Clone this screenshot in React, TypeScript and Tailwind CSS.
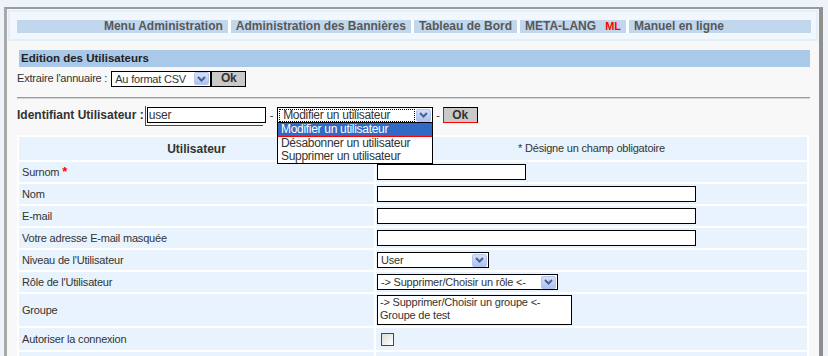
import React from 'react'

// petite flèche bleue des listes déroulantes (style XP)
function Arrow() {
  return (
    <span className="flex h-[13px] w-[15px] items-center justify-center rounded-[2px] border border-[#b4c6ee] bg-gradient-to-b from-[#d4e0fc] to-[#adc2f4]">
      <svg width="9" height="6" viewBox="0 0 9 6">
        <path d="M1 1l3.5 3.5L8 1" stroke="#4d6185" strokeWidth="2" fill="none" />
      </svg>
    </span>
  )
}

interface SelectProps {
  w: string;
  text: string;
}

function Select({ w, text }: SelectProps) {
  return (
    <div className={`flex h-[16px] items-center justify-between border border-black bg-white pl-[3px] pr-[1px] ${w}`}>
      <span className="leading-[14px] text-[#333]">{text}</span>
      <Arrow />
    </div>
  )
}

function TextBox({ w }: { w: string }) {
  return <div className={`h-[16px] border border-black bg-white ${w}`} />
}

function OkButton({ red }: { red?: boolean }) {
  return (
    <button
      className={`h-[16px] w-[35px] border border-black bg-[#c9c9c9] text-[12px] font-bold leading-[13px] text-[#333] ${
        red ? 'border-b-[#ff0000] border-l-[#ff0000]' : ''
      }`}
    >
      Ok
    </button>
  )
}

const menu = ['Menu Administration', 'Administration des Bannières', 'Tableau de Bord', 'META-LANG', 'Manuel en ligne']

export default function App() {
  return (
    <div className="h-[356px] w-[828px] overflow-hidden bg-[#edf3f8] pl-[4px] pt-[7px] font-['Liberation_Sans',Arial,sans-serif] text-[11px] tracking-[-0.2px] text-[#333]">
      <div className="h-[360px] w-[819px] border-l-[3px] border-r-4 border-t-2 border-l-[#a9a9a9] border-r-[#8f8f8f] border-t-[#9a9a9a] bg-[#f8f8f8]">
        {/* bandeau du menu */}
        <div className="ml-[1px] mt-[1px] w-[810px] border-2 border-[#e2eff9] bg-[#f1f7fc] pb-[6px] pl-[7px] pt-[8px]">
          <div className="flex h-[13px] w-[794px] items-stretch justify-center bg-[#c1d7ed] text-[12px] font-bold leading-[13px] tracking-normal text-[#585858]">
            {menu.map((m, i) => (
              <React.Fragment key={m}>
                {i > 0 && <span className="w-[3px] bg-white" />}
                <span className="px-[5px]">
                  {m}
                  {m === 'META-LANG' && <span className="ml-[9px] text-[11px] text-[#ff0000]">ML</span>}
                </span>
              </React.Fragment>
            ))}
          </div>
        </div>

        {/* contenu */}
        <div className="relative ml-[1px] mt-[1px] w-[810px] pl-[9px] pr-[1px] pt-[8px]">
          <div className="ml-[2px] flex h-[17px] w-[791px] items-center bg-[#aac9e8] pl-[2px] text-[11.5px] font-bold tracking-normal text-[#222]">
            Edition des Utilisateurs
          </div>

          <div className="mt-[4px] flex h-[15px] items-center">
            <span className="mr-[4px] text-[#333]">Extraire l'annuaire :</span>
            <Select w="w-[100px]" text="Au format CSV" />
            <OkButton />
          </div>

          <div className="mt-[11px] h-[2px] w-[793px] border-t border-[#9b9b9b] bg-[#d6d6d6]" />

          <div className="relative mt-[8px] flex h-[16px] items-center">
            <span className="mr-[3px] text-[12px] font-bold tracking-normal text-[#333]">Identifiant Utilisateur :</span>
            <div className="flex h-[16px] w-[119px] items-center border border-black bg-white pl-[1px] text-[12px] text-[#333]">user</div>
            <span className="mx-[4px]">-</span>
            <div className="relative flex h-[16px] w-[156px] items-center justify-between border border-black bg-white pr-[1px]">
              <span className="ml-[1px] flex h-[13px] w-[136px] items-center border border-dotted border-black pl-[3px] text-[12px] tracking-[-0.3px]">
                Modifier un utilisateur
              </span>
              <Arrow />
            </div>
            <span className="mx-[3px]">-</span>
            <OkButton red />

            {/* soulignement rouge autour du champ */}
            <span className="absolute left-[128px] top-[-1px] h-[20px] w-[1px] bg-[#ff0000]" />
            <span className="absolute left-[128px] top-[18px] h-[1px] w-[118px] bg-[#ff0000]" />

            {/* liste ouverte */}
            <div className="absolute left-[260px] top-[15px] z-10 w-[156px] border border-black bg-white text-[12px] leading-[13px] tracking-[-0.3px]">
              <div className="border-b border-[#ff0000] bg-[#316ac5] pl-[3px] text-white">Modifier un utilisateur</div>
              <div className="pl-[3px]">Désabonner un utilisateur</div>
              <div className="pl-[3px]">Supprimer un utilisateur</div>
            </div>
          </div>

          {/* tableau utilisateur */}
          <div className="mt-[12px] grid w-[792px] grid-cols-[355px_431px] gap-[2px] bg-white p-[2px]">
            <div className="flex h-[23px] items-center justify-center bg-[#e8f3fd] text-[12px] font-bold tracking-normal text-[#333]">Utilisateur</div>
            <div className="flex h-[23px] items-center justify-center bg-[#e8f3fd]">* Désigne un champ obligatoire</div>

            <div className="flex h-[20px] items-center bg-[#e8f3fd] pl-[3px]">
              Surnom <span className="ml-[3px] text-[13px] font-bold text-[#ff0000]">*</span>
            </div>
            <div className="flex h-[20px] items-center bg-[#e8f3fd] pl-[1px]">
              <TextBox w="w-[149px]" />
            </div>

            <div className="flex h-[20px] items-center bg-[#e8f3fd] pl-[3px]">Nom</div>
            <div className="flex h-[20px] items-center bg-[#e8f3fd] pl-[1px]">
              <TextBox w="w-[319px]" />
            </div>

            <div className="flex h-[20px] items-center bg-[#e8f3fd] pl-[3px]">E-mail</div>
            <div className="flex h-[20px] items-center bg-[#e8f3fd] pl-[1px]">
              <TextBox w="w-[319px]" />
            </div>

            <div className="flex h-[20px] items-center bg-[#e8f3fd] pl-[3px]">Votre adresse E-mail masquée</div>
            <div className="flex h-[20px] items-center bg-[#e8f3fd] pl-[1px]">
              <TextBox w="w-[319px]" />
            </div>

            <div className="flex h-[20px] items-center bg-[#e8f3fd] pl-[3px]">Niveau de l'Utilisateur</div>
            <div className="flex h-[20px] items-center bg-[#e8f3fd] pl-[1px]">
              <Select w="w-[112px]" text="User" />
            </div>

            <div className="flex h-[20px] items-center bg-[#e8f3fd] pl-[3px]">Rôle de l'Utilisateur</div>
            <div className="flex h-[20px] items-center bg-[#e8f3fd] pl-[1px]">
              <Select w="w-[181px]" text="-> Supprimer/Choisir un rôle <-" />
            </div>

            <div className="flex h-[32px] items-center bg-[#e8f3fd] pl-[3px]">Groupe</div>
            <div className="flex h-[32px] items-center bg-[#e8f3fd] pl-[1px]">
              <div className="h-[30px] w-[195px] border border-black bg-white pl-[2px] leading-[13px]">
                <div>-&gt; Supprimer/Choisir un groupe &lt;-</div>
                <div>Groupe de test</div>
              </div>
            </div>

            <div className="flex h-[22px] items-center bg-[#e8f3fd] pl-[3px]">Autoriser la connexion</div>
            <div className="flex h-[22px] items-center bg-[#e8f3fd] pl-[5px]">
              <input
                type="checkbox"
                className="h-[13px] w-[13px] appearance-none border border-[#1c5180] bg-gradient-to-br from-[#dcdcd7] to-white"
              />
            </div>

            <div className="h-[20px] bg-[#e8f3fd]" />
            <div className="h-[20px] bg-[#e8f3fd]" />
          </div>
        </div>
      </div>
    </div>
  )
}
